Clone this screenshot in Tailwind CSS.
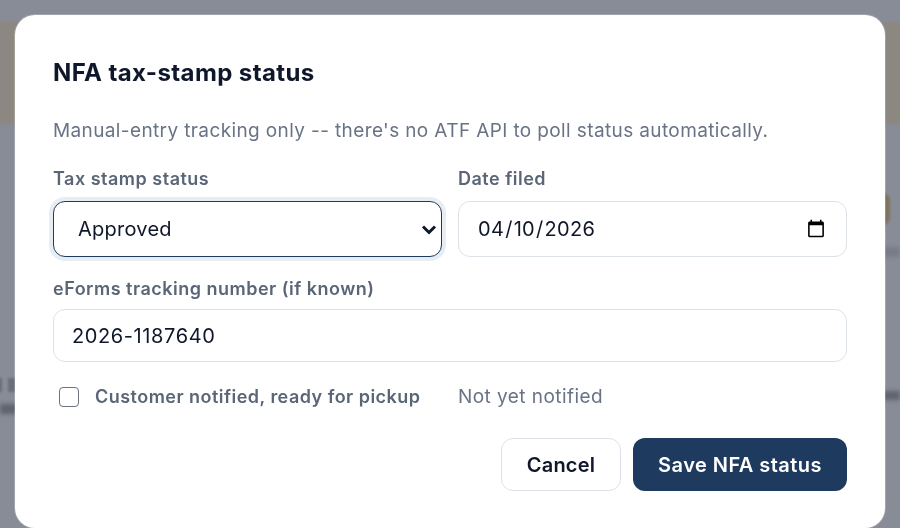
<!DOCTYPE html>
<html lang="en">
  <head>
    <meta charset="UTF-8" />
    <meta name="viewport" content="width=device-width, initial-scale=1.0" />
    <title>NFA tax-stamp status</title>
    <script src="https://cdn.jsdelivr.net/npm/@tailwindcss/browser@4"></script>
  </head>
  <body class="bg-[#888c96] font-['Inter',sans-serif] text-[#0f172a] overflow-hidden">
    <!-- Blurred page behind the overlay -->
    <div class="fixed inset-0 overflow-hidden">
      <div class="absolute left-0 top-[22px] w-full h-[102px] bg-[#8c8780] blur-[1px]"></div>
      <div class="absolute left-[-4px] top-[378px] w-[6px] h-[14px] bg-[#6b6e78] blur-[1px]"></div>
      <div class="absolute left-[8px] top-[378px] w-[10px] h-[14px] bg-[#6b6e78] blur-[1px]"></div>
      <div class="absolute left-0 top-[404px] w-[18px] h-[10px] bg-[#5f636e] blur-[2px]"></div>
      <div class="absolute left-[872px] top-[192px] w-[18px] h-[34px] rounded-full bg-[#7f735f] blur-[1px]"></div>
      <div class="absolute right-0 top-[247px] w-[20px] h-[10px] bg-[#787c88] blur-[2px]"></div>
      <div class="absolute right-0 top-[391px] w-[20px] h-[9px] bg-[#5f636e] blur-[2px]"></div>
    </div>

    <div class="relative h-[528px] pt-[15px] px-[15px]">
      <div class="bg-white h-[513px] rounded-[20px] pt-[39px] px-[38px] ring-1 ring-white/20">
        <h2 class="text-[24px] leading-[38px] font-bold tracking-[0.4px]">NFA tax-stamp status</h2>

        <p class="mt-[26px] text-[19px] leading-[26px] tracking-[0.38px] text-[#697386]">
          Manual-entry tracking only -- there's no ATF API to poll status automatically.
        </p>

        <div class="mt-[24px] grid grid-cols-2 gap-x-4">
          <div>
            <label class="block text-[18px] leading-[22px] font-semibold tracking-[0.5px] text-[#5a6677] mb-[11px]">Tax stamp status</label>
            <div class="relative">
              <select class="w-full h-[56px] appearance-none bg-white border-[1.5px] border-[#1e3a5f] rounded-xl pl-6 pr-8 text-[20px] tracking-[0.25px] outline-none shadow-[0_0_0_4px_#e8edf3]">
                <option>Approved</option>
              </select>
              <svg class="absolute right-[5px] top-[23px] w-[16px] h-[11px]" viewBox="0 0 16 11" fill="none">
                <path d="M2 2.5l6 6 6-6" stroke="#0f172a" stroke-width="3" />
              </svg>
            </div>
          </div>
          <div>
            <label class="block text-[18px] leading-[22px] font-semibold tracking-[0.5px] text-[#5a6677] mb-[11px]">Date filed</label>
            <input type="date" value="2026-04-10" class="w-full h-[56px] bg-white border-[1.5px] border-[#dde1e8] rounded-xl px-[18px] text-[20px] tracking-[0.3px] outline-none" />
          </div>
        </div>

        <div class="mt-[21px]">
          <label class="block text-[18px] leading-[22px] font-semibold tracking-[0.5px] text-[#5a6677] mb-[9px]">eForms tracking number (if known)</label>
          <input type="text" value="2026-1187640" class="w-full h-[53px] bg-white border-[1.5px] border-[#dde1e8] rounded-xl px-[18px] text-[20px] tracking-[0.6px] outline-none" />
        </div>

        <div class="mt-[22px] grid grid-cols-2 gap-x-4 items-center">
          <label class="flex items-center gap-[16px] pl-[6px] text-[18px] leading-[26px] font-semibold tracking-[0.47px] text-[#5a6677]">
            <span class="w-[20px] h-[20px] rounded-[4px] border-[1.5px] border-[#6b7280] bg-white shrink-0"></span>
            Customer notified, ready for pickup
          </label>
          <span class="text-[19px] leading-[26px] tracking-[0.44px] text-[#697386]">Not yet notified</span>
        </div>

        <div class="mt-[28px] flex justify-end gap-[12px]">
          <button class="w-[120px] h-[53px] bg-white border-[1.5px] border-[#dde1e8] rounded-xl text-[20px] font-semibold tracking-[0.2px]">Cancel</button>
          <button class="w-[214px] h-[53px] bg-[#1e3a5f] rounded-xl text-[20px] font-semibold tracking-[0.45px] text-white">Save NFA status</button>
        </div>
      </div>
    </div>
  </body>
</html>
